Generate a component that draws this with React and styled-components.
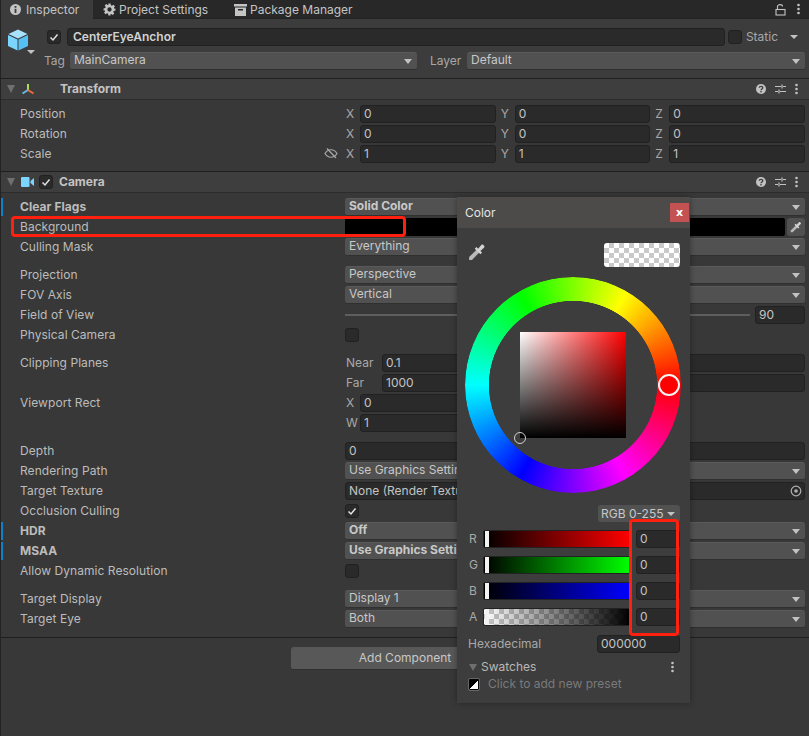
import styled, { createGlobalStyle } from 'styled-components';

const GlobalStyle = createGlobalStyle`
  html, body {
    margin: 0;
    padding: 0;
    background: #383838;
  }
  * {
    box-sizing: border-box;
  }
`;

const Page = styled.div`
  position: relative;
  width: 809px;
  height: 736px;
  overflow: hidden;
  background: #383838;
  border-left: 1px solid #232323;
  font-family: Inter, 'Noto Sans', sans-serif;
  font-size: 12px;
  line-height: 14px;
  color: #bcbcbc;
`;

// #region Tabs

const TabBar = styled.div`
  display: flex;
  height: 19px;
  background: #282828;
  border-bottom: 1px solid #232323;
`;

const Tab = styled.div`
  display: flex;
  align-items: center;
  gap: ${p => p.$gap || 4}px;
  height: 19px;
  width: ${p => p.$width}px;
  padding-left: ${p => p.$pad}px;
  color: #c4c4c4;
  background: ${p => (p.$active ? '#3c3c3c' : 'transparent')};
  svg {
    flex: none;
  }
`;

const TabTools = styled.div`
  display: flex;
  align-items: center;
  gap: 11px;
  margin-left: auto;
  padding-right: 9px;
`;

// #endregion

// #region Object header

const ObjectHeader = styled.div`
  display: flex;
  height: 60px;
  padding: 9px 4px 0 0;
  background: #3c3c3c;
  border-bottom: 1px solid #1f1f1f;
`;

const ObjectIcon = styled.div`
  position: relative;
  flex: none;
  width: 43px;
  padding: 1px 0 0 7px;
`;

const IconArrow = styled.span`
  position: absolute;
  left: 26px;
  top: 22px;
  border-left: 4px solid transparent;
  border-right: 4px solid transparent;
  border-top: 4px solid #c2c2c2;
`;

const ObjectRows = styled.div`
  display: flex;
  flex: 1;
  flex-direction: column;
  gap: 6px;
`;

const ObjectRow = styled.div`
  display: flex;
  align-items: center;
  height: 18px;
  padding-left: ${p => p.$indent || 0}px;
`;

const NameField = styled.div`
  flex: 1;
  height: 18px;
  margin: 0 3px 0 6px;
  padding: 1px 5px;
  background: #2a2a2a;
  border: 1px solid #212121;
  border-radius: 3px;
  font-weight: 600;
  color: #d2d2d2;
  white-space: nowrap;
`;

const SideLabel = styled.span`
  flex: none;
  width: ${p => p.$width}px;
  padding-left: ${p => p.$pad || 0}px;
  color: ${p => (p.$dim ? '#a8a8a8' : '#bcbcbc')};
`;

const StaticArrow = styled.span`
  margin: 0 7px 0 12px;
  border-left: 4px solid transparent;
  border-right: 4px solid transparent;
  border-top: 4px solid #c2c2c2;
`;

// #endregion

// #region Component sections

const Section = styled.section`
  border-bottom: 1px solid #1f1f1f;
`;

const SectionHeader = styled.div`
  display: flex;
  align-items: center;
  height: 21px;
  padding: 0 11px 0 6px;
  background: #3e3e3e;
  border-bottom: 1px solid #2c2c2c;
  font-weight: 700;
  color: #c4c4c4;
`;

const Foldout = styled.span`
  flex: none;
  margin-right: ${p => p.$margin ?? 5}px;
  border-left: 4.5px solid transparent;
  border-right: 4.5px solid transparent;
  border-top: 8px solid #6f6f6f;
`;

const SectionTitle = styled.span`
  margin-left: ${p => p.$margin || 0}px;
`;

const HeaderTools = styled.div`
  display: flex;
  align-items: center;
  gap: 9px;
  margin-left: auto;
`;

const Rows = styled.div`
  padding: 4px 0 ${p => p.$bottom}px;
`;

const Row = styled.div`
  position: relative;
  display: grid;
  grid-template-columns: 344px 460px;
  align-items: center;
  height: 20px;
  margin-top: ${p => (p.$spaced ? 8 : 0)}px;
`;

const RowLabel = styled.span`
  padding-left: 19px;
  font-weight: ${p => (p.$bold ? 700 : 400)};
  color: #bcbcbc;
  white-space: nowrap;
  letter-spacing: 0.05px;
`;

const OverrideMark = styled.span`
  position: absolute;
  left: 0;
  top: 1px;
  width: 2px;
  height: 18px;
  background: #0f81c8;
`;

const Select = styled.div`
  position: relative;
  height: 18px;
  padding: 0 4px;
  background: #515151;
  border: 1px solid #303030;
  border-top-color: #5a5a5a;
  border-left: 0;
  border-right: 0;
  border-radius: 3px;
  font-weight: ${p => (p.$bold ? 700 : 400)};
  color: #c8c8c8;
  white-space: nowrap;
  &::after {
    content: '';
    position: absolute;
    right: 5px;
    top: 6px;
    border-left: 4px solid transparent;
    border-right: 4px solid transparent;
    border-top: 5px solid #c2c2c2;
  }
`;

const Input = styled.div`
  display: flex;
  align-items: center;
  justify-content: space-between;
  flex: ${p => (p.$fixed ? 'none' : 1)};
  width: ${p => (p.$fixed ? `${p.$fixed}px` : 'auto')};
  height: 18px;
  padding: 0 2px 0 3px;
  background: #2a2a2a;
  border: 1px solid #212121;
  border-radius: 3px;
  color: #c4c4c4;
  white-space: nowrap;
  min-width: 0;
`;

const Vector = styled.div`
  display: grid;
  grid-template-columns: repeat(3, 1fr);
  gap: 4px;
`;

const VectorCell = styled.div`
  display: flex;
  align-items: center;
  min-width: 0;
`;

const AxisLabel = styled.span`
  flex: none;
  width: ${p => p.$width || 15}px;
  padding-left: 1px;
  color: #a8a8a8;
`;

const Inline = styled.div`
  display: flex;
  align-items: center;
  gap: ${p => p.$gap || 0}px;
`;

const LockIcon = styled.span`
  position: absolute;
  left: 323px;
  top: 3px;
  display: flex;
`;

const Checkbox = styled.span`
  display: flex;
  align-items: center;
  justify-content: center;
  flex: none;
  width: 14px;
  height: 14px;
  margin: 0 ${p => p.$right || 0}px 0 ${p => p.$left || 0}px;
  background: #2a2a2a;
  border: 1px solid ${p => (p.$light ? '#232323' : '#212121')};
  border-radius: 3px;
`;

const ColorBar = styled.div`
  flex: 1;
  height: 18px;
  background: #000;
  border-radius: 2px;
`;

const PickerButton = styled.div`
  display: flex;
  align-items: center;
  justify-content: center;
  flex: none;
  width: 18px;
  height: 18px;
  background: #505050;
  border-radius: 3px;
`;

const SliderTrack = styled.div`
  flex: 1;
  height: 2px;
  margin-top: -1px;
  background: #5e5e5e;
`;

const Footer = styled.div`
  display: flex;
  justify-content: center;
  padding-top: 9px;
`;

const AddButton = styled.button`
  width: 228px;
  height: 23px;
  padding: 0;
  background: #585858;
  border: 0;
  border-bottom: 1px solid #303030;
  border-radius: 3px;
  font: inherit;
  color: #c8c8c8;
`;

// #endregion

// #region Color popup

const Popup = styled.div`
  position: absolute;
  left: 456px;
  top: 197px;
  width: 233px;
  height: 506px;
  background: #3d3d3d;
  box-shadow: 0 0 6px rgba(0, 0, 0, 0.35);
`;

const PopupTitle = styled.div`
  display: flex;
  align-items: center;
  justify-content: space-between;
  height: 31px;
  padding: 0 1px 0 8px;
  background: #4c4b49;
  color: #e4e4e4;
`;

const CloseButton = styled.div`
  display: flex;
  align-items: center;
  justify-content: center;
  width: 19px;
  height: 19px;
  background: #c45252;
  color: #fff;
  font-size: 11px;
  font-weight: 700;
  font-family: 'DejaVu Sans', sans-serif;
`;

const PreviewRow = styled.div`
  display: flex;
  align-items: flex-start;
  justify-content: space-between;
  padding: 15px 10px 0 11px;
`;

const Swatch = styled.div`
  width: 76px;
  height: 24px;
  border-radius: 3px;
  background-color: #fff;
  background-image: conic-gradient(
    #c9c9c9 25%,
    #fff 0 50%,
    #c9c9c9 0 75%,
    #fff 0
  );
  background-size: 10px 10px;
`;

const Wheel = styled.div`
  position: relative;
  width: 216px;
  height: 216px;
  margin: 10px 0 0 8px;
`;

const HueRing = styled.div`
  width: 216px;
  height: 216px;
  border-radius: 50%;
  background: conic-gradient(
    from 90deg,
    #f00,
    #f0f,
    #00f,
    #0ff,
    #0f0,
    #ff0,
    #f00
  );
  mask: radial-gradient(closest-side, transparent 77.6%, #000 78.2%);
`;

const SatValue = styled.div`
  position: absolute;
  left: 55px;
  top: 55px;
  width: 106px;
  height: 106px;
  background: linear-gradient(to top, #000, transparent),
    linear-gradient(to right, #fff, #f00);
`;

const HueHandle = styled.div`
  position: absolute;
  left: 193px;
  top: 97px;
  width: 22px;
  height: 22px;
  border-radius: 50%;
  background: #f00;
  border: 2px solid #f4f4f4;
`;

const SatHandle = styled.div`
  position: absolute;
  left: 49px;
  top: 155px;
  width: 12px;
  height: 12px;
  border-radius: 50%;
  border: 1px solid #d0d0d0;
`;

const ModeRow = styled.div`
  display: flex;
  justify-content: flex-end;
  margin-top: 12px;
  padding-right: 10px;
`;

const ModeSelect = styled.div`
  display: flex;
  align-items: center;
  gap: 3px;
  width: 82px;
  height: 17px;
  padding-left: 3px;
  background: #515151;
  border-radius: 3px;
  color: #c8c8c8;
  white-space: nowrap;
  &::after {
    content: '';
    border-left: 4px solid transparent;
    border-right: 4px solid transparent;
    border-top: 4px solid #c2c2c2;
  }
`;

const Channels = styled.div`
  display: flex;
  flex-direction: column;
  gap: 8px;
  margin-top: 8px;
  padding: 0 10px 0 12px;
`;

const Channel = styled.div`
  display: flex;
  align-items: center;
  height: 18px;
`;

const ChannelLabel = styled.span`
  flex: none;
  width: 14px;
  color: #a8a8a8;
`;

const ChannelBar = styled.div`
  position: relative;
  flex: none;
  width: 148px;
  height: 18px;
  margin-right: 5px;
  border: 1px solid #222;
  border-radius: 2px;
  background: ${p => p.$fill};
`;

const ChannelThumb = styled.span`
  position: absolute;
  left: 1px;
  top: 0;
  width: 4px;
  height: 16px;
  background: #f2f2f2;
`;

const HexRow = styled.div`
  display: flex;
  align-items: center;
  justify-content: space-between;
  height: 18px;
  margin-top: 9px;
  padding: 0 10px 0 11px;
  color: #a8a8a8;
`;

const SwatchHead = styled.div`
  display: flex;
  align-items: center;
  justify-content: space-between;
  margin-top: 7px;
  padding: 0 16px 0 12px;
  color: #b8b8b8;
`;

const SwatchTitle = styled.div`
  display: flex;
  align-items: center;
  gap: 4px;
`;

const SwatchFold = styled.span`
  border-left: 4px solid transparent;
  border-right: 4px solid transparent;
  border-top: 7px solid #6f6f6f;
`;

const PresetRow = styled.div`
  display: flex;
  align-items: center;
  gap: 8px;
  margin-top: 3px;
  padding-left: 11px;
  color: #7a7a7a;
`;

const PresetIcon = styled.span`
  flex: none;
  width: 12px;
  height: 13px;
  border: 1px solid #666;
  border-radius: 2px;
  background: linear-gradient(135deg, #000 50%, #fff 50%);
  box-shadow: inset 0 0 0 1px #000;
`;

// #endregion

const Annotation = styled.div`
  position: absolute;
  left: ${p => p.$x}px;
  top: ${p => p.$y}px;
  width: ${p => p.$w}px;
  height: ${p => p.$h}px;
  border: 3px solid #ff2010;
  border-radius: 4px;
  pointer-events: none;
`;

function Check() {
  return (
    <svg width="10" height="10" viewBox="0 0 10 10">
      <path d="M1.5 5.5 L4 8 L8.5 2.5" fill="none" stroke="#e0e0e0" strokeWidth="1.5" />
    </svg>
  );
}

function Dots({ color = '#c2c2c2' }) {
  return (
    <svg width="3" height="12" viewBox="0 0 3 12">
      <circle cx="1.5" cy="2" r="1.3" fill={color} />
      <circle cx="1.5" cy="6" r="1.3" fill={color} />
      <circle cx="1.5" cy="10" r="1.3" fill={color} />
    </svg>
  );
}

function HelpIcon() {
  return (
    <svg width="10" height="10" viewBox="0 0 10 10">
      <circle cx="5" cy="5" r="5" fill="#c2c2c2" />
      <path d="M3.2 3.8 C3.4 1.9 6.8 2 6.8 3.8 C6.8 5 5 4.9 5 6.2" fill="none" stroke="#3e3e3e" strokeWidth="1.3" />
      <rect x="4.3" y="7" width="1.4" height="1.4" fill="#3e3e3e" />
    </svg>
  );
}

function PresetsIcon() {
  return (
    <svg width="11" height="10" viewBox="0 0 11 10">
      <path d="M0 2.5 H6 M8 2.5 H11 M0 7.5 H3 M5 7.5 H11" stroke="#c2c2c2" strokeWidth="1.2" />
      <path d="M7 0.5 V4.5 M4 5.5 V9.5" stroke="#c2c2c2" strokeWidth="1.2" />
    </svg>
  );
}

function Eyedropper({ size = 14 }) {
  return (
    <svg width={size} height={size} viewBox="0 0 16 16">
      <path d="M1 15 L1 12.5 L8 5.5 L10.5 8 L3.5 15 Z" fill="#b9b9b9" />
      <path d="M7.5 3.5 L9 5 L12 1.6 C13 .6 15.4 3 14.4 4 L11 7 L12.5 8.5 L11 10 L6 5 Z" fill="#d4d4d4" />
    </svg>
  );
}

function ComponentTools() {
  return (
    <HeaderTools>
      <HelpIcon />
      <PresetsIcon />
      <Dots />
    </HeaderTools>
  );
}

function Field({ axis, value, labelWidth }) {
  return (
    <VectorCell>
      <AxisLabel $width={labelWidth}>{axis}</AxisLabel>
      <Input>{value}</Input>
    </VectorCell>
  );
}

function Vector3({ values }) {
  return (
    <Vector>
      {values.map(([axis, value]) => (
        <Field key={axis} axis={axis} value={value} />
      ))}
    </Vector>
  );
}

function PropertyRow({ label, bold, override, spaced, children }) {
  return (
    <Row $spaced={spaced}>
      {override && <OverrideMark />}
      <RowLabel $bold={bold}>{label}</RowLabel>
      {children}
    </Row>
  );
}

const channels = [
  ['R', 'linear-gradient(to right, #000, #f00)'],
  ['G', 'linear-gradient(to right, #000, #0f0)'],
  ['B', 'linear-gradient(to right, #000, #00f)'],
  [
    'A',
    'linear-gradient(to right, rgba(0,0,0,0), #000), conic-gradient(#c9c9c9 25%, #fff 0 50%, #c9c9c9 0 75%, #fff 0) 0 0 / 10px 10px',
  ],
];

function ColorPopup() {
  return (
    <Popup>
      <PopupTitle>
        Color
        <CloseButton>x</CloseButton>
      </PopupTitle>
      <PreviewRow>
        <Eyedropper size={18} />
        <Swatch />
      </PreviewRow>
      <Wheel>
        <HueRing />
        <SatValue />
        <HueHandle />
        <SatHandle />
      </Wheel>
      <ModeRow>
        <ModeSelect>RGB 0-255</ModeSelect>
      </ModeRow>
      <Channels>
        {channels.map(([name, fill]) => (
          <Channel key={name}>
            <ChannelLabel>{name}</ChannelLabel>
            <ChannelBar $fill={fill}>
              <ChannelThumb />
            </ChannelBar>
            <Input>0</Input>
          </Channel>
        ))}
      </Channels>
      <HexRow>
        Hexadecimal
        <Input $fixed={83}>000000</Input>
      </HexRow>
      <SwatchHead>
        <SwatchTitle>
          <SwatchFold />
          Swatches
        </SwatchTitle>
        <Dots />
      </SwatchHead>
      <PresetRow>
        <PresetIcon />
        Click to add new preset
      </PresetRow>
    </Popup>
  );
}

export default function App() {
  return (
    <Page>
      <GlobalStyle />
      <TabBar>
        <Tab $active $width={92} $pad={9} $gap={5}>
          <svg width="11" height="11" viewBox="0 0 11 11">
            <circle cx="5.5" cy="5.5" r="5.5" fill="#c4c4c4" />
            <rect x="4.6" y="2" width="1.8" height="1.8" fill="#3c3c3c" />
            <rect x="4.6" y="4.8" width="1.8" height="4.2" fill="#3c3c3c" />
          </svg>
          Inspector
        </Tab>
        <Tab $width={131} $pad={10} $gap={3}>
          <svg width="13" height="13" viewBox="0 0 24 24">
            <path
              fill="#c4c4c4"
              fillRule="evenodd"
              d="M10 1h4l.6 3.2 1.9.8 2.7-1.8 2.8 2.8-1.8 2.7.8 1.9L23 10v4l-3.2.6-.8 1.9 1.8 2.7-2.8 2.8-2.7-1.8-1.9.8L14 23h-4l-.6-3.2-1.9-.8-2.7 1.8-2.8-2.8 1.8-2.7-.8-1.9L1 14v-4l3.2-.6.8-1.9-1.8-2.7 2.8-2.8 2.7 1.8 1.9-.8zM12 8a4 4 0 1 0 0 8 4 4 0 0 0 0-8z"
            />
          </svg>
          Project Settings
        </Tab>
        <Tab $width={130} $pad={10} $gap={3}>
          <svg width="13" height="12" viewBox="0 0 13 12">
            <rect x="0" y="0" width="13" height="2.5" fill="#c4c4c4" />
            <path d="M1 3.5 H12 V12 H1 Z M4 5 V6.5 H9 V5 Z" fill="#c4c4c4" fillRule="evenodd" />
          </svg>
          Package Manager
        </Tab>
        <TabTools>
          <svg width="11" height="13" viewBox="0 0 11 13">
            <path d="M2.5 6 V3.5 C2.5 1 7.5 1 7.5 3.5" fill="none" stroke="#c4c4c4" strokeWidth="1.1" />
            <rect x="1" y="6.5" width="9" height="5.5" fill="none" stroke="#c4c4c4" strokeWidth="1.1" />
          </svg>
          <Dots color="#c4c4c4" />
        </TabTools>
      </TabBar>

      <ObjectHeader>
        <ObjectIcon>
          <svg width="20" height="22" viewBox="0 0 20 22">
            <path d="M10 0.5 L19.5 5 L10 9.5 L0.5 5 Z" fill="#a8e2ff" />
            <path d="M0 6 L9.5 10.5 V21.5 L0 17 Z" fill="#7cd5ff" />
            <path d="M20 6 L10.5 10.5 V21.5 L20 17 Z" fill="#56c0f5" />
          </svg>
          <IconArrow />
        </ObjectIcon>
        <ObjectRows>
          <ObjectRow $indent={3}>
            <Checkbox>
              <Check />
            </Checkbox>
            <NameField>CenterEyeAnchor</NameField>
            <Checkbox $right={4} />
            <SideLabel $dim>Static</SideLabel>
            <StaticArrow />
          </ObjectRow>
          <ObjectRow>
            <SideLabel $dim $width={26}>Tag</SideLabel>
            <Select style={{ width: 347 }}>MainCamera</Select>
            <SideLabel $dim $width={50} $pad={13}>Layer</SideLabel>
            <Select style={{ flex: 1 }}>Default</Select>
          </ObjectRow>
        </ObjectRows>
      </ObjectHeader>

      <Section>
        <SectionHeader>
          <Foldout $margin={6} />
          <svg width="14" height="13" viewBox="0 0 14 13">
            <path d="M7 1 V7" stroke="#a5e25a" strokeWidth="2" />
            <path d="M7 7 L1.5 10.5" stroke="#68b9e6" strokeWidth="2" />
            <path d="M7 7 L12.5 10.5" stroke="#f06a3a" strokeWidth="2" />
          </svg>
          <SectionTitle $margin={25}>Transform</SectionTitle>
          <ComponentTools />
        </SectionHeader>
        <Rows $bottom={7}>
          <PropertyRow label="Position">
            <Vector3 values={[['X', '0'], ['Y', '0'], ['Z', '0']]} />
          </PropertyRow>
          <PropertyRow label="Rotation">
            <Vector3 values={[['X', '0'], ['Y', '0'], ['Z', '0']]} />
          </PropertyRow>
          <PropertyRow label="Scale">
            <LockIcon>
              <svg width="14" height="13" viewBox="0 0 14 13">
                <path d="M1 6.5 C4 1.5 10 1.5 13 6.5 C10 11.5 4 11.5 1 6.5 Z" fill="none" stroke="#a8a8a8" strokeWidth="1.2" />
                <path d="M3 1.5 L12 11" stroke="#a8a8a8" strokeWidth="1.2" />
              </svg>
            </LockIcon>
            <Vector3 values={[['X', '1'], ['Y', '1'], ['Z', '1']]} />
          </PropertyRow>
        </Rows>
      </Section>

      <Section>
        <SectionHeader>
          <Foldout $margin={6} />
          <svg width="13" height="10" viewBox="0 0 13 10">
            <rect x="0" y="0" width="8.5" height="10" rx="1" fill="#7cd5ff" />
            <path d="M9.5 4 L13 1 V9 L9.5 6 Z" fill="#7cd5ff" />
          </svg>
          <Checkbox $left={5}>
            <Check />
          </Checkbox>
          <SectionTitle $margin={6}>Camera</SectionTitle>
          <ComponentTools />
        </SectionHeader>
        <Rows $bottom={8}>
          <PropertyRow label="Clear Flags" bold override>
            <Select $bold>Solid Color</Select>
          </PropertyRow>
          <PropertyRow label="Background">
            <Inline $gap={2}>
              <ColorBar />
              <PickerButton>
                <Eyedropper size={12} />
              </PickerButton>
            </Inline>
          </PropertyRow>
          <PropertyRow label="Culling Mask">
            <Select>Everything</Select>
          </PropertyRow>
          <PropertyRow label="Projection" spaced>
            <Select>Perspective</Select>
          </PropertyRow>
          <PropertyRow label="FOV Axis">
            <Select>Vertical</Select>
          </PropertyRow>
          <PropertyRow label="Field of View">
            <Inline $gap={5}>
              <SliderTrack />
              <Input $fixed={50}>90</Input>
            </Inline>
          </PropertyRow>
          <PropertyRow label="Physical Camera">
            <Checkbox />
          </PropertyRow>
          <PropertyRow label="Clipping Planes" spaced>
            <Inline>
              <AxisLabel $width={37}>Near</AxisLabel>
              <Input>0.1</Input>
            </Inline>
          </PropertyRow>
          <PropertyRow label="">
            <Inline>
              <AxisLabel $width={37}>Far</AxisLabel>
              <Input>1000</Input>
            </Inline>
          </PropertyRow>
          <PropertyRow label="Viewport Rect">
            <Vector>
              <Field axis="X" value="0" />
              <Field axis="Y" value="0" />
            </Vector>
          </PropertyRow>
          <PropertyRow label="">
            <Vector>
              <Field axis="W" value="1" />
              <Field axis="H" value="1" />
            </Vector>
          </PropertyRow>
          <PropertyRow label="Depth" spaced>
            <Input>0</Input>
          </PropertyRow>
          <PropertyRow label="Rendering Path">
            <Select>Use Graphics Settings</Select>
          </PropertyRow>
          <PropertyRow label="Target Texture">
            <Input>
              None (Render Texture)
              <svg width="12" height="12" viewBox="0 0 12 12">
                <circle cx="6" cy="6" r="4.8" fill="none" stroke="#b0b0b0" strokeWidth="1.2" />
                <circle cx="6" cy="6" r="1.8" fill="#b0b0b0" />
              </svg>
            </Input>
          </PropertyRow>
          <PropertyRow label="Occlusion Culling">
            <Checkbox>
              <Check />
            </Checkbox>
          </PropertyRow>
          <PropertyRow label="HDR" bold override>
            <Select $bold>Off</Select>
          </PropertyRow>
          <PropertyRow label="MSAA" bold override>
            <Select $bold>Use Graphics Settings</Select>
          </PropertyRow>
          <PropertyRow label="Allow Dynamic Resolution">
            <Checkbox />
          </PropertyRow>
          <PropertyRow label="Target Display" spaced>
            <Select>Display 1</Select>
          </PropertyRow>
          <PropertyRow label="Target Eye">
            <Select>Both</Select>
          </PropertyRow>
        </Rows>
      </Section>

      <Footer>
        <AddButton>Add Component</AddButton>
      </Footer>

      <ColorPopup />

      <Annotation $x={10} $y={216} $w={395} $h={21} />
      <Annotation $x={628} $y={519} $w={50} $h={117} />
    </Page>
  );
}
